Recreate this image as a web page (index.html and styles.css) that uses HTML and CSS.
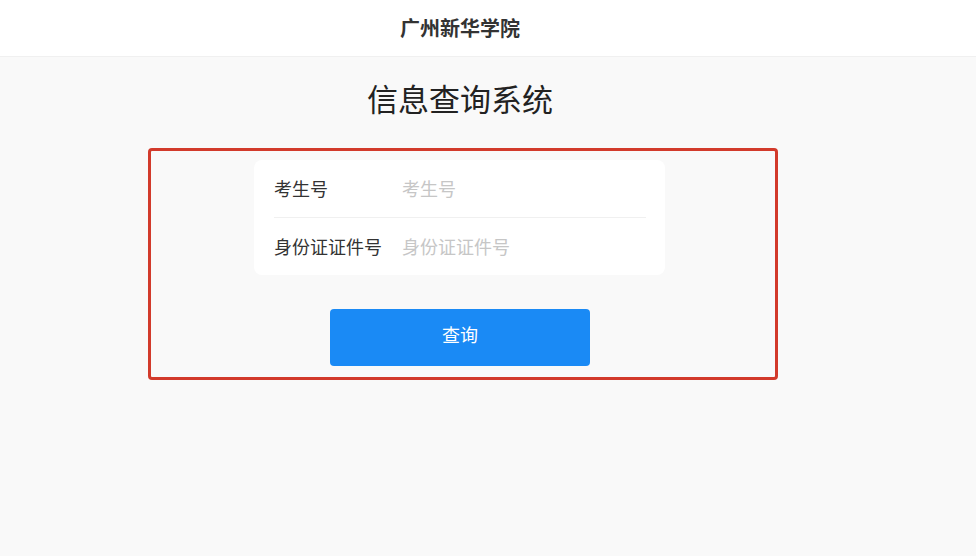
FILE: index.html
```html
<!DOCTYPE html>
<html lang="zh-CN">
  <head>
    <meta charset="UTF-8" />
    <meta name="viewport" content="width=device-width, initial-scale=1.0" />
    <title>信息查询系统</title>
    <link rel="stylesheet" href="styles.css">
  </head>
  <body>
    <header class="top-bar">
      <div class="top-bar-title">广州新华学院</div>
    </header>
    <div class="page">
      <h1 class="title">信息查询系统</h1>
      <div class="query-box">
        <div class="form-card">
          <label class="field">
            <span class="field-label">考生号</span>
            <input class="field-input" type="text" placeholder="考生号" />
          </label>
          <label class="field">
            <span class="field-label">身份证证件号</span>
            <input class="field-input" type="text" placeholder="身份证证件号" />
          </label>
        </div>
        <button class="query-btn" type="button">查询</button>
      </div>
    </div>
  </body>
</html>
```

FILE: styles.css
```css
/* 基础样式 */
body {
  margin: 0;
  padding: 0;
  background-color: #f9f9f9;
  font-family: "Noto Sans CJK SC", "Noto Sans", sans-serif;
  color: #333;
}

.page {
  width: 920px;
}

/* 顶部标题栏 */
.top-bar {
  height: 57px;
  background-color: #fff;
  border-bottom: 1px solid #f0f0f0;
  box-sizing: border-box;
}

.top-bar-title {
  width: 920px;
  height: 56px;
  line-height: 56px;
  text-align: center;
  font-size: 20px;
  font-weight: bold;
  color: #333;
}

.title {
  margin: 20px 0 29px;
  text-align: center;
  font-size: 31px;
  font-weight: normal;
  line-height: 42px;
  color: #222;
}

/* 查询区域 */
.query-box {
  width: 630px;
  margin-left: 148px;
  padding: 9px 0 11px;
  border: 3px solid #d23a2b;
  border-radius: 4px;
  box-sizing: border-box;
}

.form-card {
  width: 411px;
  margin-left: 103px;
  background-color: #fff;
  border-radius: 8px;
}

.field {
  display: flex;
  align-items: center;
  height: 57px;
  margin: 0 19px 0 20px;
  padding-bottom: 2px;
  box-sizing: border-box;
  font-size: 18px;
}

.field + .field {
  height: 58px;
  border-top: 1px solid #f0f0f0;
}

.field-label {
  width: 128px;
  flex-shrink: 0;
  color: #333;
}

.field-input {
  flex: 1;
  min-width: 0;
  border: none;
  outline: none;
  background: transparent;
  padding: 0;
  font-family: inherit;
  font-size: 18px;
  color: #333;
}

.field-input::placeholder {
  color: #c6c6c6;
}

/* 查询按钮 */
.query-btn {
  display: block;
  width: 260px;
  height: 57px;
  margin: 34px 0 0 179px;
  padding: 0 0 8px;
  border: none;
  border-radius: 4px;
  background-color: #1a8af5;
  color: #fff;
  font-family: inherit;
  font-size: 18px;
  cursor: pointer;
}
```
